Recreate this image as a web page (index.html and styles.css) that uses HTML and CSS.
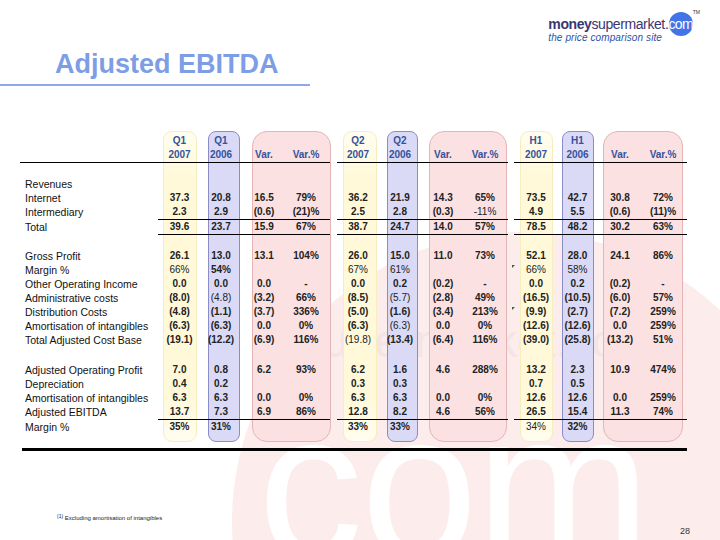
FILE: index.html
```html
<!DOCTYPE html>
<html lang="en">
<head>
<meta charset="utf-8">
<title>Adjusted EBITDA</title>
<link rel="stylesheet" href="styles.css">
</head>
<body>
<div class="slide">
  <div class="wm" aria-hidden="true">
    <div class="wm-circle"></div>
    <div class="wm-super"></div>
    <div class="wm-com"></div>
  </div>

  <header class="top">
    <h1 class="title">Adjusted EBITDA</h1>
    <div class="logo">
      <div class="brand"><span class="money">money</span><span class="super">supermarket</span><span class="dot">.</span><span class="com">com</span><span class="tm">TM</span></div>
      <div class="tag">the price comparison site</div>
    </div>
  </header>
  <div class="title-rule"></div>

  <div class="table">
    <div class="layer pills">
      <span class="pill py c2"></span>
      <span class="pill pb c3"></span>
      <span class="pill pp c4"></span>
      <span class="pill py c7"></span>
      <span class="pill pb c8"></span>
      <span class="pill pp c9"></span>
      <span class="pill py c12"></span>
      <span class="pill pb c13"></span>
      <span class="pill pp c14"></span>
    </div>
    <div class="layer cells">
      <span class="sp"></span>

      <span></span><span class="h">Q1</span><span class="h">Q1</span><span></span><span></span><span></span><span class="h">Q2</span><span class="h">Q2</span><span></span><span></span><span></span><span class="h">H1</span><span class="h">H1</span><span></span><span></span>
      <span></span><span class="h">2007</span><span class="h">2006</span><span class="h">Var.</span><span class="h">Var.%</span><span></span><span class="h">2007</span><span class="h">2006</span><span class="h">Var.</span><span class="h">Var.%</span><span></span><span class="h">2007</span><span class="h">2006</span><span class="h">Var.</span><span class="h">Var.%</span>
      <span class="rule s1"></span><span></span><span class="rule s2"></span><span></span><span class="rule s3"></span>

      <span class="sp"></span>

      <span class="l">Revenues</span><span class="fill"></span>
      <span class="l">Internet</span><span class="c">37.3</span><span class="c">20.8</span><span class="c">16.5</span><span class="c">79%</span><span></span><span class="c">36.2</span><span class="c">21.9</span><span class="c">14.3</span><span class="c">65%</span><span></span><span class="c">73.5</span><span class="c">42.7</span><span class="c">30.8</span><span class="c">72%</span>
      <span class="l">Intermediary</span><span class="c">2.3</span><span class="c">2.9</span><span class="c">(0.6)</span><span class="c">(21)%</span><span></span><span class="c">2.5</span><span class="c">2.8</span><span class="c">(0.3)</span><span class="c n">-11%</span><span></span><span class="c">4.9</span><span class="c">5.5</span><span class="c">(0.6)</span><span class="c">(11)%</span>
      <span></span><span class="rule t1"></span><span></span><span class="rule s2"></span><span></span><span class="rule s3"></span>
      <span class="l">Total</span><span class="c">39.6</span><span class="c">23.7</span><span class="c">15.9</span><span class="c">67%</span><span></span><span class="c">38.7</span><span class="c">24.7</span><span class="c">14.0</span><span class="c">57%</span><span></span><span class="c">78.5</span><span class="c">48.2</span><span class="c">30.2</span><span class="c">63%</span>
      <span></span><span class="rule t1"></span><span></span><span class="rule s2"></span><span></span><span class="rule s3"></span>

      <span class="sp"></span>

      <span class="l">Gross Profit</span><span class="c">26.1</span><span class="c">13.0</span><span class="c">13.1</span><span class="c">104%</span><span></span><span class="c">26.0</span><span class="c">15.0</span><span class="c">11.0</span><span class="c">73%</span><span></span><span class="c">52.1</span><span class="c">28.0</span><span class="c">24.1</span><span class="c">86%</span>
      <span class="l">Margin %</span><span class="c n">66%</span><span class="c">54%</span><span></span><span></span><span></span><span class="c n">67%</span><span class="c n">61%</span><span></span><span></span><span></span><span class="c n mark">66%</span><span class="c n">58%</span><span></span><span></span>
      <span class="l">Other Operating Income</span><span class="c">0.0</span><span class="c">0.0</span><span class="c">0.0</span><span class="c">-</span><span></span><span class="c">0.0</span><span class="c">0.2</span><span class="c">(0.2)</span><span class="c">-</span><span></span><span class="c">0.0</span><span class="c">0.2</span><span class="c">(0.2)</span><span class="c">-</span>
      <span class="l">Administrative costs</span><span class="c">(8.0)</span><span class="c n">(4.8)</span><span class="c">(3.2)</span><span class="c">66%</span><span></span><span class="c">(8.5)</span><span class="c n">(5.7)</span><span class="c">(2.8)</span><span class="c">49%</span><span></span><span class="c">(16.5)</span><span class="c">(10.5)</span><span class="c">(6.0)</span><span class="c">57%</span>
      <span class="l">Distribution Costs</span><span class="c">(4.8)</span><span class="c">(1.1)</span><span class="c">(3.7)</span><span class="c">336%</span><span></span><span class="c">(5.0)</span><span class="c">(1.6)</span><span class="c">(3.4)</span><span class="c">213%</span><span></span><span class="c mark">(9.9)</span><span class="c">(2.7)</span><span class="c">(7.2)</span><span class="c">259%</span>
      <span class="l">Amortisation of intangibles</span><span class="c">(6.3)</span><span class="c">(6.3)</span><span class="c">0.0</span><span class="c">0%</span><span></span><span class="c">(6.3)</span><span class="c n">(6.3)</span><span class="c">0.0</span><span class="c">0%</span><span></span><span class="c">(12.6)</span><span class="c">(12.6)</span><span class="c">0.0</span><span class="c">259%</span>
      <span class="l">Total Adjusted Cost Base</span><span class="c">(19.1)</span><span class="c">(12.2)</span><span class="c">(6.9)</span><span class="c">116%</span><span></span><span class="c n">(19.8)</span><span class="c">(13.4)</span><span class="c">(6.4)</span><span class="c">116%</span><span></span><span class="c">(39.0)</span><span class="c">(25.8)</span><span class="c">(13.2)</span><span class="c">51%</span>

      <span class="sp"></span>

      <span class="l">Adjusted Operating Profit</span><span class="c">7.0</span><span class="c">0.8</span><span class="c">6.2</span><span class="c">93%</span><span></span><span class="c">6.2</span><span class="c">1.6</span><span class="c">4.6</span><span class="c">288%</span><span></span><span class="c">13.2</span><span class="c">2.3</span><span class="c">10.9</span><span class="c">474%</span>
      <span class="l">Depreciation</span><span class="c">0.4</span><span class="c">0.2</span><span></span><span></span><span></span><span class="c">0.3</span><span class="c">0.3</span><span></span><span></span><span></span><span class="c">0.7</span><span class="c">0.5</span><span></span><span></span>
      <span class="l">Amortisation of intangibles</span><span class="c">6.3</span><span class="c">6.3</span><span class="c">0.0</span><span class="c">0%</span><span></span><span class="c">6.3</span><span class="c">6.3</span><span class="c">0.0</span><span class="c">0%</span><span></span><span class="c">12.6</span><span class="c">12.6</span><span class="c">0.0</span><span class="c">259%</span>
      <span class="l">Adjusted EBITDA</span><span class="c">13.7</span><span class="c">7.3</span><span class="c">6.9</span><span class="c">86%</span><span></span><span class="c">12.8</span><span class="c">8.2</span><span class="c">4.6</span><span class="c">56%</span><span></span><span class="c">26.5</span><span class="c">15.4</span><span class="c">11.3</span><span class="c">74%</span>
      <span></span><span class="rule t1"></span><span></span><span class="rule s2"></span><span></span><span class="rule s3"></span>
      <span class="l">Margin %</span><span class="c">35%</span><span class="c">31%</span><span></span><span></span><span></span><span class="c">33%</span><span class="c">33%</span><span></span><span></span><span></span><span class="c n">34%</span><span class="c">32%</span><span></span><span></span>

      <span class="sp"></span>
    </div>
  </div>

  <div class="thick-rule"></div>

  <footer class="foot">
    <p class="note"><sup>(1)</sup> Excluding amortisation of intangibles</p>
    <p class="page">28</p>
  </footer>
</div>
</body>
</html>
```

FILE: styles.css
```css
html, body {
  margin: 0;
  padding: 0;
  background: #ffffff;
}

.slide {
  position: relative;
  width: 720px;
  height: 540px;
  overflow: hidden;
  background: #ffffff;
  font-family: "Liberation Sans", Arial, sans-serif;
  color: #111111;
}

/* ---------- watermark (background decoration) ---------- */
.wm {
  position: absolute;
  inset: 0;
  z-index: 0;
  pointer-events: none;
}

.wm-circle {
  position: absolute;
  left: 232px;
  top: 232px;
  width: 580px;
  height: 580px;
  border-radius: 50%;
  background: #fcecec;
}

.wm-super {
  position: absolute;
  left: 300px;
  top: 331px;
  font-size: 46px;
  line-height: 20px;
  color: #f4e4e4;
  white-space: nowrap;
}

.wm-super::before {
  content: "supermarket.com";
}

.wm-com {
  position: absolute;
  left: 258px;
  top: 441px;
  font-size: 210px;
  line-height: 90px;
  color: #ffffff;
  letter-spacing: -2px;
  white-space: nowrap;
}

.wm-com::before {
  content: "com";
}

/* ---------- header ---------- */
.top {
  position: relative;
  z-index: 1;
  display: flex;
  justify-content: space-between;
  align-items: flex-start;
  height: 84px;
  padding: 0 20px 0 55px;
  box-sizing: border-box;
}

.title {
  margin: 48px 0 0;
  font-size: 27px;
  line-height: 32px;
  font-weight: bold;
  color: #7d9de5;
}

.logo {
  margin-top: 12px;
  display: flex;
  flex-direction: column;
}

.brand {
  display: flex;
  align-items: center;
  height: 24px;
  color: #3a3672;
  font-size: 14px;
  line-height: 16px;
  letter-spacing: -0.4px;
}

.money {
  font-weight: bold;
}

.dot {
  letter-spacing: 0;
}

.com {
  display: flex;
  align-items: center;
  justify-content: center;
  width: 24px;
  height: 24px;
  border-radius: 50%;
  background: #4374e7;
  color: #ffffff;
  font-size: 14px;
  letter-spacing: -0.6px;
}

.tm {
  align-self: flex-start;
  margin: -3px 0 0 0;
  font-size: 5px;
  line-height: 6px;
  letter-spacing: 0;
  color: #333333;
}

.tag {
  margin-top: -4px;
  font-size: 10px;
  line-height: 11px;
  font-style: italic;
  color: #2f4fa6;
  letter-spacing: 0.1px;
}

.title-rule {
  position: relative;
  z-index: 1;
  width: 310px;
  height: 2px;
  background: #8ea8e9;
}

/* ---------- table ---------- */
.table {
  position: relative;
  z-index: 1;
  display: grid;
  width: 664px;
  margin: 45px 0 0 20px;
}

.layer {
  grid-area: 1 / 1;
  display: grid;
  grid-template-columns: 139px 41px 42px 44px 40px 11px 42px 42px 44px 40px 10px 42px 41px 44px 42px;
}

.pills {
  grid-template-rows: 1fr;
}

.pill {
  grid-row: 1;
  box-sizing: border-box;
}

.py {
  background: linear-gradient(#fffdf0, #fff9d9 15%, #fff9d9 85%, #fffdf0);
  border: 1px solid #f6eebf;
  border-radius: 9px;
}

.pb {
  background: #dadaf6;
  border: 1px solid #8b8bc8;
  border-radius: 8px;
}

.pp {
  background: #fbe1e1;
  border: 1px solid #e6b4b4;
  border-radius: 15px;
}

.c2  { grid-column: 2;       margin: 0 3px 0 4px; }
.c3  { grid-column: 3;       margin: 0 2px 0 8px; }
.c4  { grid-column: 4 / 7;   margin: 0 6px 0 10px; }
.c7  { grid-column: 7;       margin: 0 2px 0 6px; }
.c8  { grid-column: 8;       margin: 0 3px 0 8px; }
.c9  { grid-column: 9 / 12;  margin: 0 8px 0 8px; }
.c12 { grid-column: 12;      margin: 0 4px 0 5px; }
.c13 { grid-column: 13;      margin: 0 4px 0 5px; }
.c14 { grid-column: 14 / 16; margin: 0 1px 0 5px; }

.cells {
  grid-template-rows: 3px 14px 14px 1px 14px 14px 14px 14px 1px 14px 1px 14px 14px 14px 14px 14px 14px 14px 14px 16px 14px 14px 14px 14px 1px 14px 8px;
  font-size: 10px;
  line-height: 14px;
}

.sp {
  grid-column: 1 / -1;
}

.fill {
  grid-column: span 14;
}

.l {
  padding-left: 5px;
  font-size: 10.5px;
  color: #111111;
  white-space: nowrap;
}

.h {
  text-align: center;
  font-weight: bold;
  color: #34529c;
  white-space: nowrap;
}

.c {
  position: relative;
  text-align: center;
  font-weight: bold;
  color: #222222;
  white-space: nowrap;
}

.c.n {
  font-weight: normal;
}

.mark::before {
  content: "";
  position: absolute;
  left: -3px;
  top: 2px;
  width: 0;
  height: 0;
  border-top: 3px solid #3f5f3a;
  border-right: 3px solid transparent;
}

.rule {
  background: #000000;
}

.s1 { grid-column: span 5; margin-right: -4px; }
.s2 { grid-column: span 4; margin-right: -3px; }
.s3 { grid-column: span 4; margin-left: -1px; margin-right: -3px; }
.t1 { grid-column: span 4; margin-left: -1px; margin-right: -4px; }

.thick-rule {
  position: relative;
  z-index: 1;
  width: 665px;
  height: 3px;
  margin: 6px 0 0 22px;
  background: #000000;
}

/* ---------- footer ---------- */
.foot {
  position: relative;
  z-index: 1;
  display: flex;
  justify-content: space-between;
  align-items: flex-start;
  margin-top: 61px;
  padding: 0 30px 0 57px;
}

.note {
  margin: 0;
  font-size: 6px;
  line-height: 8px;
  color: #222222;
}

.note sup {
  font-size: 5px;
  vertical-align: 2px;
}

.page {
  margin: 14px 0 0;
  font-size: 9px;
  line-height: 10px;
  color: #333333;
}
```
